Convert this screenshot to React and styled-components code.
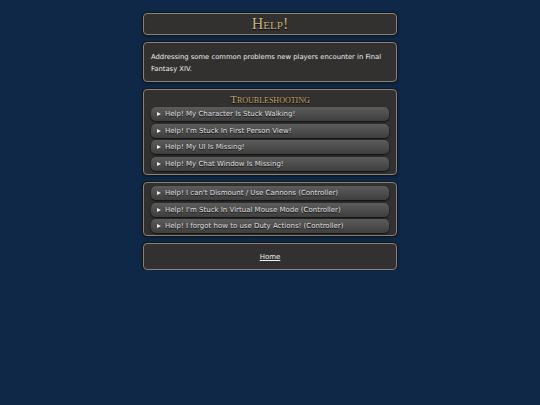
import React from 'react'
import styled, { createGlobalStyle } from 'styled-components'

const GlobalStyle = createGlobalStyle`
  html, body {
    margin: 0;
    padding: 0;
    background: #0f2847;
  }
  body {
    font-family: 'DejaVu Sans', Verdana, sans-serif;
  }
`

const troubleshooting = [
  'Help! My Character Is Stuck Walking!',
  "Help! I'm Stuck In First Person View!",
  'Help! My UI Is Missing!',
  'Help! My Chat Window Is Missing!',
]

const controller = [
  "Help! I can't Dismount / Use Cannons (Controller)",
  "Help! I'm Stuck In Virtual Mouse Mode (Controller)",
  'Help! I forgot how to use Duty Actions! (Controller)',
]

const App = () => {
  return (
    <>
      <GlobalStyle />
      <Page>
        <Panel $pad='1px 7px'>
          <Title>Help!</Title>
        </Panel>
        <Panel $pad='8px 7px 6px'>
          <Intro>
            Addressing some common problems new players encounter in Final
            Fantasy XIV.
          </Intro>
        </Panel>
        <Panel $pad='3px 7px 3px'>
          <Heading>Troubleshooting</Heading>
          <List>
            {troubleshooting.map((t) => (
              <Item key={t}>{t}</Item>
            ))}
          </List>
        </Panel>
        <Panel $pad='3px 7px 2px'>
          <List>
            {controller.map((t) => (
              <Item key={t}>{t}</Item>
            ))}
          </List>
        </Panel>
        <Panel $pad='8px 7px 7px'>
          <Footer>
            <a href='#'>Home</a>
          </Footer>
        </Panel>
      </Page>
    </>
  )
}

const Page = styled.main`
  width: 254px;
  margin: 0 auto;
  padding-top: 13px;
  display: flex;
  flex-direction: column;
  gap: 7px;
`

const Panel = styled.section`
  background: #323130;
  border: 1px solid #84837e;
  border-radius: 4px;
  box-shadow: 0 0 0 1px #15161a, 0 1px 3px rgba(0, 0, 0, 0.6);
  padding: ${(p) => p.$pad || '2px 7px'};
`

const Title = styled.h1`
  margin: 0;
  text-align: center;
  font-family: 'Liberation Serif', 'DejaVu Serif', serif;
  font-variant: small-caps;
  font-weight: normal;
  font-size: 16px;
  line-height: 18px;
  color: #c9b27f;
  text-shadow: 0 1px 1px #000;
`

const Heading = styled.h2`
  margin: 0 0 1px;
  text-align: center;
  font-family: 'Liberation Serif', 'DejaVu Serif', serif;
  font-variant: small-caps;
  font-weight: normal;
  font-size: 11px;
  line-height: 13px;
  color: #c9a66b;
  text-shadow: 0 1px 1px #000;
`

const Intro = styled.p`
  margin: 0;
  font-size: 6.8px;
  line-height: 12px;
  color: #ececec;
`

const List = styled.div`
  display: flex;
  flex-direction: column;
  gap: 2.7px;
`

const Item = styled.div`
  height: 14px;
  display: flex;
  align-items: center;
  padding-left: 6px;
  border-radius: 5px;
  background: linear-gradient(#5c5c5c, #3e3e3e);
  box-shadow: 0 1px 2px #0c0c0c;
  font-size: 7px;
  color: #e2e2e2;
  text-shadow: 0 1px 1px #000;
  &::before {
    content: '';
    width: 0;
    height: 0;
    margin-right: 4px;
    border-left: 4px solid #eee;
    border-top: 2.5px solid transparent;
    border-bottom: 2.5px solid transparent;
  }
`

const Footer = styled.div`
  text-align: center;
  font-size: 7px;
  line-height: 10px;
  a {
    color: #eee;
  }
`

export default App
